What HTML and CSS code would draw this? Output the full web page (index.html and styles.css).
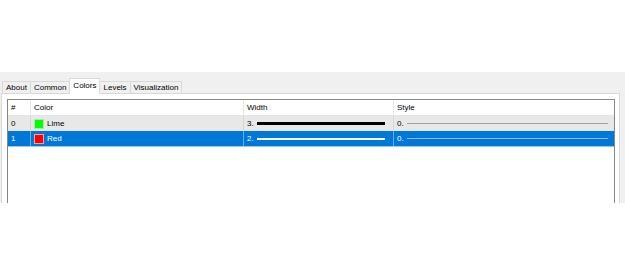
FILE: index.html
```html
<!DOCTYPE html>
<html>
<head>
<meta charset="utf-8">
<title>Colors</title>
<link rel="stylesheet" href="styles.css">
</head>
<body>
	<div class="top"></div>
	<div class="dialog">
		<div class="tabs">
			<span class="tab">About</span>
			<span class="tab">Common</span>
			<span class="tab active">Colors</span>
			<span class="tab">Levels</span>
			<span class="tab">Visualization</span>
		</div>
		<div class="panel">
			<div class="list">
				<div class="row head">
					<span class="cell">#</span>
					<span class="cell">Color</span>
					<span class="cell">Width</span>
					<span class="cell">Style</span>
				</div>
				<div class="row odd">
					<span class="cell">0</span>
					<span class="cell"><i class="swatch lime"></i>Lime</span>
					<span class="cell">3.<b class="line w3"></b></span>
					<span class="cell">0.<b class="line style"></b></span>
				</div>
				<div class="row selected">
					<span class="cell">1</span>
					<span class="cell"><i class="swatch red"></i>Red</span>
					<span class="cell">2.<b class="line w2"></b></span>
					<span class="cell">0.<b class="line style"></b></span>
				</div>
			</div>
		</div>
	</div>
</body>
</html>
```

FILE: styles.css
```css
* { margin: 0; padding: 0; box-sizing: border-box; }
body { background: #fff; font-family: "Liberation Sans", Arial, sans-serif; font-size: 8px; color: #000; }

.top { height: 72px; }
.dialog { height: 131px; background: #f0f0f0; padding: 6px 5px 0 1px; overflow: hidden; }

.tabs { display: flex; align-items: flex-end; height: 15px; padding-left: 1px; }
.tab { height: 12px; line-height: 11px; padding: 0 3px; border: 1px solid #d9d9d9; border-bottom: none; margin-right: -1px; background: #f0f0f0; }
.tab.active { height: 16px; line-height: 13px; margin-bottom: -1px; background: #fff; position: relative; z-index: 1; }

.panel { height: 200px; background: #fff; border: 1px solid #d9d9d9; padding: 5px 5px 0 5px; }
.list { width: 608px; height: 160px; border: 1px solid #828790; }

.row { display: grid; grid-template-columns: 23px 213px 150px 220px; height: 15px; line-height: 15px; }
.row.head { height: 16px; border-bottom: 1px solid #e5e5e5; }
.cell { display: flex; align-items: center; padding-left: 3px; border-right: 1px solid #e5e5e5; white-space: nowrap; }
.cell:last-child { border-right: none; }

.odd { background: #e8e8e8; }
.odd .cell { border-right-color: #d6d6d6; }
.selected { background: #0078d7; color: #fff; height: 16px; border-bottom: 1px solid #99c9ef; }
.selected .cell { border-right-color: #66aee7; }

.swatch { display: inline-block; width: 10px; height: 10px; margin-right: 3px; border: 1px solid #c8c8c8; }
.lime { background: #00ff00; border-color: #b8e0b8; }
.red { background: #ff0000; border-color: #f0a0a0; }

.line { display: block; flex: 1; margin-left: 3px; }
.w3 { height: 3px; background: #000; margin-right: 8px; }
.w2 { height: 2px; background: #fff; margin-right: 8px; }
.style { height: 1px; background: #a0a0a0; margin-right: 6px; }
.selected .style { background: #9ab8d8; }
```
